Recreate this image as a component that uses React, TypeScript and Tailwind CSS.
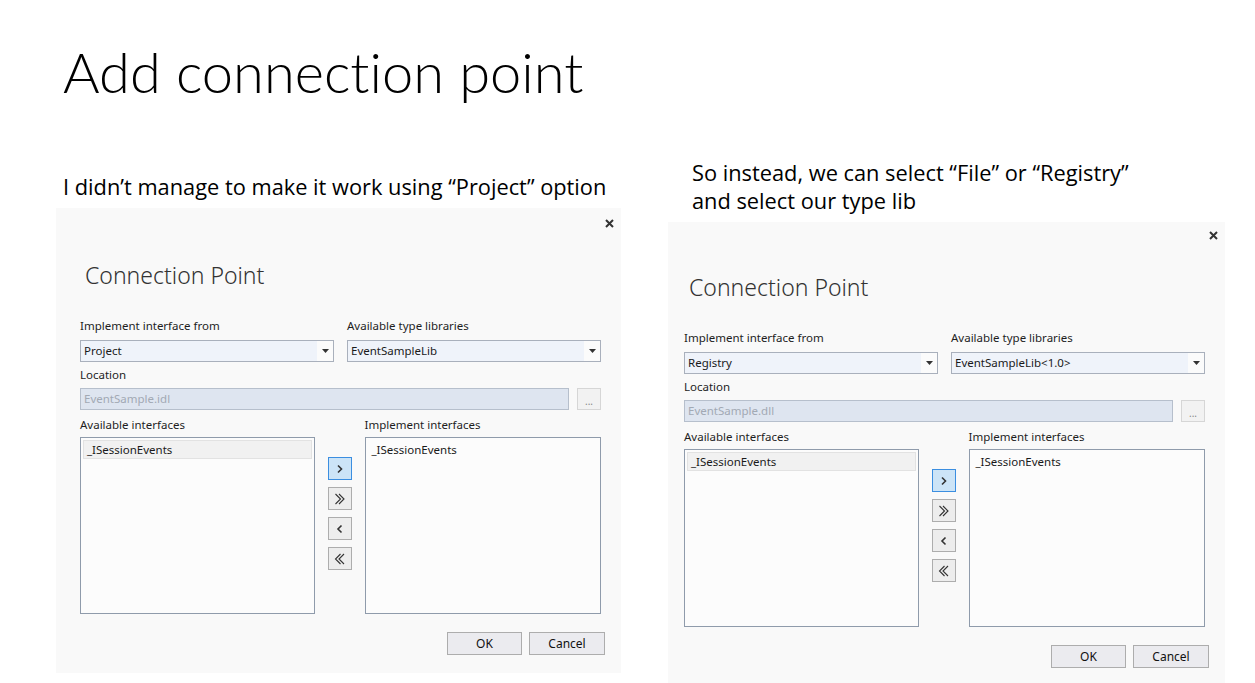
import React from "react";

const slideFont = { fontFamily: '"Open Sans", "Noto Sans", sans-serif' };
const titleFont = { fontFamily: 'Lato, "Open Sans", sans-serif' };
const uiFont = { fontFamily: '"Noto Sans", "Open Sans", sans-serif' };

function CloseX() {
  return (
    <svg width="9" height="9" viewBox="0 0 9 9">
      <path d="M1 1 L8 8 M8 1 L1 8" stroke="#333" strokeWidth="2" />
    </svg>
  );
}

function Select({ value }: { value: string }) {
  return (
    <div className="flex h-[22px] border border-[#a9b0bc] bg-[#fbfbfb]">
      <div className="flex flex-1 items-center bg-[#eff3fa] pl-[3px] text-[11.5px] text-[#1a1a1a]">{value}</div>
      <div className="flex w-[16px] items-center justify-center">
        <svg width="7" height="4" viewBox="0 0 7 4">
          <path d="M0 0 L7 0 L3.5 4 Z" fill="#333" />
        </svg>
      </div>
    </div>
  );
}

function Label({ children, className = "" }: { children: React.ReactNode; className?: string }) {
  return <div className={"h-[16px] text-[11.5px] leading-[16px] text-[#1e1e1e] " + className}>{children}</div>;
}

function ArrowBtn({ kind, active }: { kind: "r" | "rr" | "l" | "ll"; active?: boolean }) {
  const cls = active
    ? "border-[#3b8ee0] bg-[#cce4f7]"
    : "border-[#adadad] bg-[#ededed]";
  let path = "";
  let sw = 1.6;
  if (kind === "r") path = "M10 8.5 L13.5 12 L10 15.5";
  if (kind === "l") path = "M13.5 8.5 L10 12 L13.5 15.5";
  if (kind === "rr") {
    path = "M7.5 7 L12.5 12 L7.5 17 M11 7 L16 12 L11 17";
    sw = 1.1;
  }
  if (kind === "ll") {
    path = "M12.5 7 L7.5 12 L12.5 17 M16 7 L11 12 L16 17";
    sw = 1.1;
  }
  return (
    <div className={"flex h-[23px] w-[24px] items-center justify-center border " + cls}>
      <svg width="22" height="22" viewBox="1 1 22 22">
        <path d={path} stroke="#333" strokeWidth={sw} fill="none" />
      </svg>
    </div>
  );
}

function Btn({ children, w }: { children: React.ReactNode; w: string }) {
  return (
    <div className={"flex h-[23px] items-center justify-center border border-[#adadad] bg-[#ebebef] text-[12px] text-[#111] " + w}>
      {children}
    </div>
  );
}

function Dialog({
  typeSel,
  typeLib,
  location,
  pl,
  pt,
  pb,
  listH,
}: {
  typeSel: string;
  typeLib: string;
  location: string;
  pl: string;
  pt: string;
  pb: string;
  listH: string;
}) {
  return (
    <div className={"flex flex-col bg-[#f9f9f9] pr-[20px] " + pl + " " + pt + " " + pb} style={uiFont}>
      <div className="mr-[-13px] flex h-[10px] items-center justify-end">
        <CloseX />
      </div>
      <div className="ml-[5px] mt-[31px] h-[32px] text-[23px] font-light leading-[32px] text-[#333]">
        Connection Point
      </div>
      <div className="mt-[27px] grid w-[521px] grid-cols-[254px_254px] gap-x-[13px]">
        <Label>Implement interface from</Label>
        <Label>Available type libraries</Label>
        <div className="mt-[6px]">
          <Select value={typeSel} />
        </div>
        <div className="mt-[6px]">
          <Select value={typeLib} />
        </div>
      </div>
      <Label className="mt-[5px]">Location</Label>
      <div className="mt-[5px] flex h-[22px] w-[521px] gap-[8px]">
        <div className="flex flex-1 items-center border border-[#b6bfcc] bg-[#dee5f0] pl-[3px] text-[11.5px] text-[#a2a9b4]">
          {location}
        </div>
        <div className="flex w-[24px] items-end justify-center border border-[#d6d6d6] bg-[#f2f2f2] pb-[3px] text-[10px] leading-[10px] text-[#888]">
          ...
        </div>
      </div>
      <div className="mt-[7px] flex w-[521px]">
        <div className="flex w-[235px] flex-col">
          <Label>Available interfaces</Label>
          <div className={"mt-[4px] border border-[#8f9bab] bg-[#fcfcfc] p-[2px] " + listH}>
            <div className="flex h-[19px] items-center border border-[#e2e2e2] bg-[#f1f1f1] pl-[3px] text-[11.5px] text-[#1a1a1a]">
              _ISessionEvents
            </div>
          </div>
        </div>
        <div className="ml-[13px] mt-[40px] flex flex-col gap-[7px]">
          <ArrowBtn kind="r" active />
          <ArrowBtn kind="rr" />
          <ArrowBtn kind="l" />
          <ArrowBtn kind="ll" />
        </div>
        <div className="ml-[13px] flex w-[237px] flex-col">
          <Label>Implement interfaces</Label>
          <div className={"mt-[4px] border border-[#8f9bab] bg-[#fcfcfc] pl-[6px] pt-[2px] " + listH}>
            <div className="flex h-[19px] items-center text-[11.5px] text-[#1a1a1a]">_ISessionEvents</div>
          </div>
        </div>
      </div>
      <div className="mr-[-4px] mt-[18px] flex justify-end gap-[7px]">
        <Btn w="w-[75px]">OK</Btn>
        <Btn w="w-[76px]">Cancel</Btn>
      </div>
    </div>
  );
}

export default function App() {
  return (
    <div className="h-[683px] w-[1255px] overflow-hidden bg-white">
      <div
        className="ml-[63px] pt-[38px] text-[56px] font-light leading-[67px] text-black [font-variant-ligatures:none]"
        style={titleFont}
      >
        Add connection point
      </div>
      <div className="ml-[56px] flex items-start">
        <div className="flex w-[565px] flex-col pt-[68px]">
          <div className="ml-[7px] h-[28px] whitespace-nowrap text-[21.8px] leading-[28px] text-black" style={slideFont}>
            I didn’t manage to make it work using “Project” option
          </div>
          <div className="mt-[7px]">
            <Dialog
              typeSel="Project"
              typeLib="EventSampleLib"
              location="EventSample.idl"
              pl="pl-[24px]"
              pt="pt-[10px]"
              pb="pb-[18px]"
              listH="h-[177px]"
            />
          </div>
        </div>
        <div className="ml-[47px] flex w-[557px] flex-col pt-[54px]">
          <div className="ml-[24px] whitespace-nowrap text-[21.8px] leading-[28px] text-black" style={slideFont}>
            So instead, we can select “File” or “Registry”
            <br />
            and select our type lib
          </div>
          <div className="mt-[7px]">
            <Dialog
              typeSel="Registry"
              typeLib="EventSampleLib<1.0>"
              location="EventSample.dll"
              pl="pl-[16px]"
              pt="pt-[8px]"
              pb="pb-[15px]"
              listH="h-[178px]"
            />
          </div>
        </div>
      </div>
    </div>
  );
}
